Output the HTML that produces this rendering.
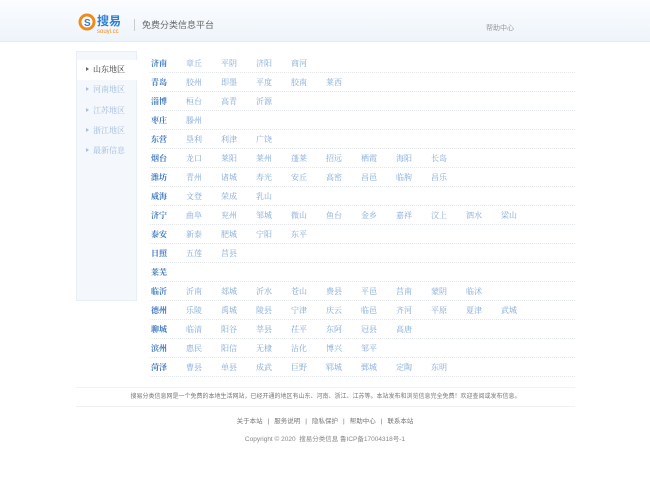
<!DOCTYPE html><html><head><meta charset="utf-8"><style>
*{margin:0;padding:0;box-sizing:border-box}
body{width:650px;height:500px;background:#fff;font-family:"Liberation Serif","Noto Serif CJK SC",serif;position:relative;overflow:hidden}
.hd{position:absolute;left:0;top:0;width:650px;height:42px;background:linear-gradient(#fbfdff,#eef4fb);border-bottom:1px solid #e3ebf4}
.logo{position:absolute;left:78px;top:12px}
.slogan{position:absolute;left:134px;top:19px;font:9px "Liberation Sans","Noto Sans CJK SC",sans-serif;color:#666;border-left:1px solid #ccc;padding-left:7px;height:12px;line-height:12px}
.help{position:absolute;left:486px;top:23px;font:7px "Liberation Sans","Noto Sans CJK SC",sans-serif;color:#999}
.side{position:absolute;left:76px;top:51px;width:61px;height:250px;background:#f4f8fc;border:1px solid #e8eef5}
.side div{height:20.3px;line-height:20px;font-size:8px;color:#9fbadb;padding-left:9px;margin-top:0}
.side div:before{content:"";display:inline-block;border-left:3px solid #a9bed8;border-top:2px solid transparent;border-bottom:2px solid transparent;margin-right:4px;vertical-align:1px}
.side .on{background:#fff;color:#333;margin-right:-1px}
.side .on:before{border-left-color:#666}
.list{position:absolute;left:150px;top:54px;width:425px}
.r{height:19px;border-bottom:1px dotted #e2e6ea;position:relative;font-size:8px;line-height:19px;color:#7ea6d6}
.r b{position:absolute;left:1px;color:#3d77c0;font-weight:bold}
.r span{position:absolute}
.ft1{position:absolute;left:76px;top:387px;width:499px;height:20px;border-top:1px solid #eef2f5;border-bottom:1px solid #eef2f5;font:6px "Liberation Sans","Noto Sans CJK SC",sans-serif;color:#777;text-align:center;line-height:19px}
.ft2{position:absolute;left:0;top:415px;width:650px;text-align:center;font:6.5px "Liberation Sans","Noto Sans CJK SC",sans-serif;color:#777}
.ft2 i{font-style:normal;margin:0 5px}
.ft3{position:absolute;left:0;top:433px;width:650px;text-align:center;font:6.5px "Liberation Sans","Noto Sans CJK SC",sans-serif;color:#888}
</style></head><body>
<div class="hd">
<div class="logo"><svg width="50" height="22" viewBox="0 0 50 22"><circle cx="9" cy="10" r="8.5" fill="#f08a1c"/><circle cx="9" cy="10" r="5.5" fill="#fff"/><text x="6" y="14" font-size="10" font-weight="bold" fill="#2d7fd8" font-family="Liberation Sans">S</text><text x="19" y="13" font-size="12" font-weight="bold" fill="#2d7fd8" font-family="Noto Sans CJK SC,sans-serif">搜易</text><text x="19" y="21" font-size="6" fill="#f08a1c" font-family="Liberation Sans">souyi.cc</text></svg></div>
<div class="slogan">免费分类信息平台</div>
<div class="help">帮助中心</div>
</div>
<div class="side"><div class="on" style="margin-top:8px">山东地区</div><div>河南地区</div><div>江苏地区</div><div>浙江地区</div><div>最新信息</div></div>
<div class="list" id="L"></div>
<div class="ft1">搜易分类信息网是一个免费的本地生活网站，已经开通的地区有山东、河南、浙江、江苏等。本站发布和浏览信息完全免费！欢迎查阅或发布信息。</div>
<div class="ft2">关于本站<i>|</i>服务说明<i>|</i>隐私保护<i>|</i>帮助中心<i>|</i>联系本站</div>
<div class="ft3">Copyright © 2020 &nbsp;搜易分类信息 鲁ICP备17004318号-1</div>
<script>
var d=[["济南","章丘 平阴 济阳 商河"],["青岛","胶州 即墨 平度 胶南 莱西"],["淄博","桓台 高青 沂源"],["枣庄","滕州"],["东营","垦利 利津 广饶"],["烟台","龙口 莱阳 莱州 蓬莱 招远 栖霞 海阳 长岛"],["潍坊","青州 诸城 寿光 安丘 高密 昌邑 临朐 昌乐"],["威海","文登 荣成 乳山"],["济宁","曲阜 兖州 邹城 微山 鱼台 金乡 嘉祥 汶上 泗水 梁山"],["泰安","新泰 肥城 宁阳 东平"],["日照","五莲 莒县"],["莱芜",""],["临沂","沂南 郯城 沂水 苍山 费县 平邑 莒南 蒙阴 临沭"],["德州","乐陵 禹城 陵县 宁津 庆云 临邑 齐河 平原 夏津 武城"],["聊城","临清 阳谷 莘县 茌平 东阿 冠县 高唐"],["滨州","惠民 阳信 无棣 沾化 博兴 邹平"],["菏泽","曹县 单县 成武 巨野 郓城 鄄城 定陶 东明"]];
var h="";d.forEach(function(r){h+='<div class="r"><b>'+r[0]+'</b>';if(r[1])r[1].split(" ").forEach(function(c,i){h+='<span style="left:'+(36+35*i)+'px">'+c+'</span>'});h+='</div>'});
document.getElementById("L").innerHTML=h;
</script>
</body></html>
